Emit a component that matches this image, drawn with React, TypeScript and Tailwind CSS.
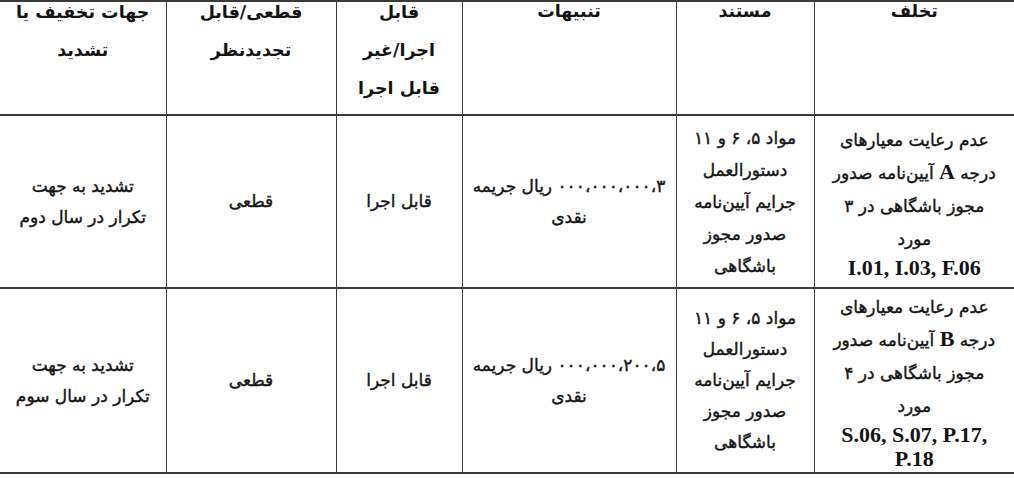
export default function App() {
  const th =
    "align-top text-center font-bold text-[17.5px] leading-[37px] px-2 border-l border-[#3a3a3a]";
  const td =
    "align-middle text-center text-[17px] leading-[31px] px-2 border-l border-[#3a3a3a] [-webkit-text-stroke:0.4px_#141414]";
  const latin =
    "font-['Liberation_Serif',serif] font-bold text-[22px] leading-[24px] [-webkit-text-stroke:0px]";
  const Num = ({ groups }: { groups: string[] }) => (
    <bdo dir="rtl">
      {groups.map((g, i) => (
        <span key={i}>
          {i > 0 ? "،" : ""}
          <span dir="ltr">{g}</span>
        </span>
      ))}
    </bdo>
  );
  const H = ({ children }: { children: React.ReactNode }) => (
    <div className="-mt-[9px]">{children}</div>
  );
  return (
    <div
      dir="rtl"
      className="w-[1014px] h-[478px] bg-white overflow-hidden text-[#141414] font-['DejaVu_Sans',sans-serif]"
    >
      <table className="w-[1014px] table-fixed border-collapse">
        <colgroup>
          <col className="w-[200px]" />
          <col className="w-[138px]" />
          <col className="w-[214px]" />
          <col className="w-[126px]" />
          <col className="w-[170px]" />
          <col className="w-[166px]" />
        </colgroup>
        <thead>
          <tr className="h-[114px] border-t-2 border-b-2 border-[#3a3a3a]">
            <th className={th}>
              <H>تخلف</H>
            </th>
            <th className={th}>
              <H>مستند</H>
            </th>
            <th className={th}>
              <H>تنبیهات</H>
            </th>
            <th className={th + " leading-[38px]"}>
              <H>
                قابل
                <br />
                اجرا/غیر
                <br />
                قابل اجرا
              </H>
            </th>
            <th className={th + " leading-[38px]"}>
              <H>
                قطعی/قابل
                <br />
                تجدیدنظر
              </H>
            </th>
            <th className={th + " leading-[38px] border-l-0"}>
              <H>
                جهات تخفیف یا
                <br />
                تشدید
              </H>
            </th>
          </tr>
        </thead>
        <tbody>
          <tr className="h-[173px] border-b-2 border-[#3a3a3a]">
            <td className={td + " leading-[33px] px-1"}>
              عدم رعایت معیارهای
              <br />
              درجه <span className={latin}>A</span> آیین‌نامه صدور
              <br />
              مجوز باشگاهی در ۳
              <br />
              مورد
              <div className={latin} dir="ltr">
                I.01, I.03, F.06
              </div>
            </td>
            <td className={td + " leading-[32px]"}>
              مواد ۵، ۶ و ۱۱
              <br />
              دستورالعمل
              <br />
              جرایم آیین‌نامه
              <br />
              صدور مجوز
              <br />
              باشگاهی
            </td>
            <td className={td}>
              <Num groups={["۳", "۰۰۰", "۰۰۰", "۰۰۰"]} /> ریال جریمه
              <br />
              نقدی
            </td>
            <td className={td}>قابل اجرا</td>
            <td className={td}>قطعی</td>
            <td className={td + " border-l-0"}>
              تشدید به جهت
              <br />
              تکرار در سال دوم
            </td>
          </tr>
          <tr className="h-[185px] border-b-2 border-[#3a3a3a]">
            <td className={td + " leading-[33px] px-1"}>
              عدم رعایت معیارهای
              <br />
              درجه <span className={latin}>B</span> آیین‌نامه صدور
              <br />
              مجوز باشگاهی در ۴
              <br />
              مورد
              <div className={latin} dir="ltr">
                S.06, S.07, P.17,
                <br />
                P.18
              </div>
            </td>
            <td className={td + " leading-[31px]"}>
              مواد ۵، ۶ و ۱۱
              <br />
              دستورالعمل
              <br />
              جرایم آیین‌نامه
              <br />
              صدور مجوز
              <br />
              باشگاهی
            </td>
            <td className={td}>
              <Num groups={["۵", "۲۰۰", "۰۰۰", "۰۰۰"]} /> ریال جریمه
              <br />
              نقدی
            </td>
            <td className={td}>قابل اجرا</td>
            <td className={td}>قطعی</td>
            <td className={td + " border-l-0"}>
              تشدید به جهت
              <br />
              تکرار در سال سوم
            </td>
          </tr>
        </tbody>
      </table>
    </div>
  );
}
